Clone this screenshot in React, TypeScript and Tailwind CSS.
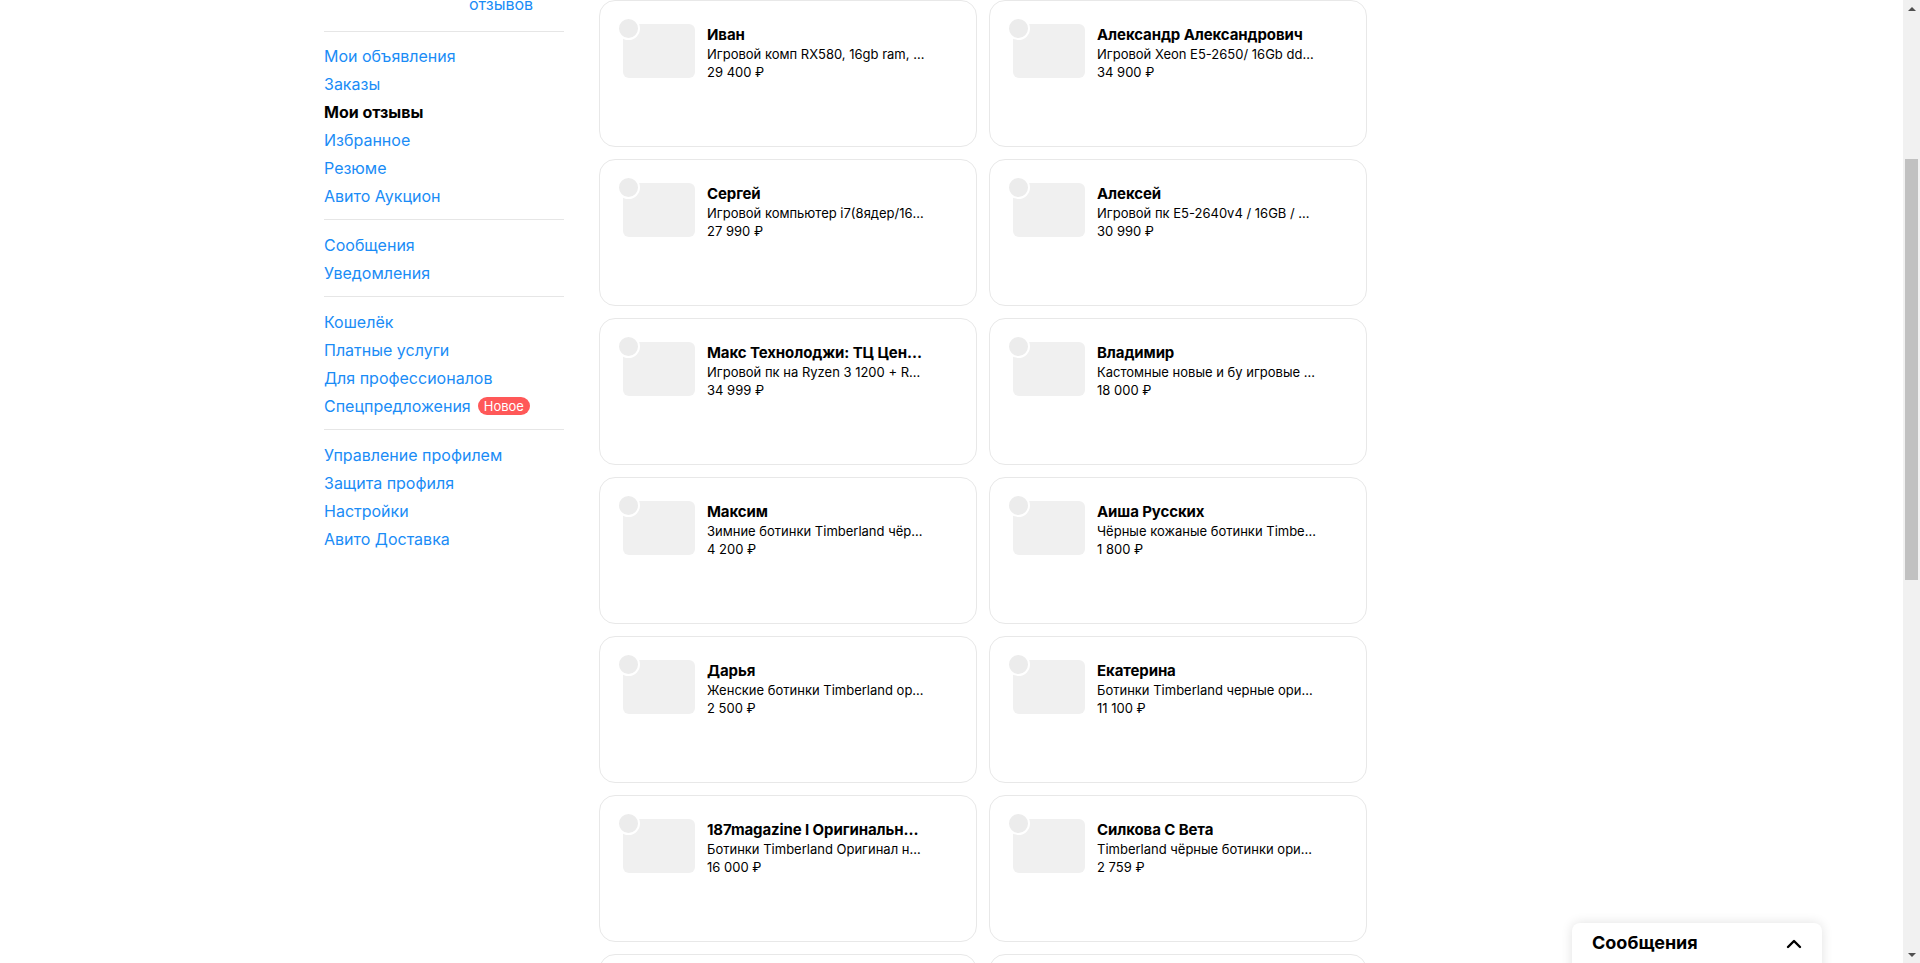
import React from 'react';
import { ChevronUp } from 'lucide-react';

interface Item {
  name: string;
  text: string;
  price: string;
}

const items: Item[] = [
  { name: 'Иван', text: 'Игровой комп RX580, 16gb ram, SSD 240gb', price: '29 400 ₽' },
  { name: 'Александр Александрович', text: 'Игровой Xeon E5-2650/ 16Gb ddr3 / GTX 1060', price: '34 900 ₽' },
  { name: 'Сергей', text: 'Игровой компьютер i7(8ядер/16 потоков)', price: '27 990 ₽' },
  { name: 'Алексей', text: 'Игровой пк E5-2640v4 / 16GB / RX 580', price: '30 990 ₽' },
  { name: 'Макс Технолоджи: ТЦ Центральный', text: 'Игровой пк на Ryzen 3 1200 + RX 570', price: '34 999 ₽' },
  { name: 'Владимир', text: 'Кастомные новые и бу игровые пк', price: '18 000 ₽' },
  { name: 'Максим', text: 'Зимние ботинки Timberland чёрные', price: '4 200 ₽' },
  { name: 'Аиша Русских', text: 'Чёрные кожаные ботинки Timberland', price: '1 800 ₽' },
  { name: 'Дарья', text: 'Женские ботинки Timberland оригинал', price: '2 500 ₽' },
  { name: 'Екатерина', text: 'Ботинки Timberland черные оригинал', price: '11 100 ₽' },
  { name: '187magazine I Оригинальные вещи', text: 'Ботинки Timberland Оригинал новые', price: '16 000 ₽' },
  { name: 'Силкова С Вета', text: 'Timberland чёрные ботинки оригинал', price: '2 759 ₽' },
  { name: 'Ольга', text: 'Ботинки Timberland мужские', price: '5 000 ₽' },
  { name: 'Николай', text: 'Timberland 6 inch premium', price: '7 500 ₽' },
];

const menu: { label: string; active?: boolean; badge?: string }[][] = [
  [
    { label: 'Мои объявления' },
    { label: 'Заказы' },
    { label: 'Мои отзывы', active: true },
    { label: 'Избранное' },
    { label: 'Резюме' },
    { label: 'Авито Аукцион' },
  ],
  [{ label: 'Сообщения' }, { label: 'Уведомления' }],
  [
    { label: 'Кошелёк' },
    { label: 'Платные услуги' },
    { label: 'Для профессионалов' },
    { label: 'Спецпредложения', badge: 'Новое' },
  ],
  [
    { label: 'Управление профилем' },
    { label: 'Защита профиля' },
    { label: 'Настройки' },
    { label: 'Авито Доставка' },
  ],
];

const Card: React.FC<{ item: Item }> = ({ item }) => (
  <div className="h-[147px] rounded-2xl border border-[#e8e8e8] bg-white px-[23px] pt-[23px] flex gap-3">
    <div className="relative w-[72px] h-[54px] shrink-0 rounded-md bg-[#f0f0f0]">
      <div className="absolute -left-[6px] -top-[7px] w-[23px] h-[23px] rounded-full bg-[#ececec] border-2 border-white" />
    </div>
    <div className="w-[219px] min-w-0 pt-px">
      <div className="truncate text-[15px] leading-5 font-bold tracking-[-0.1px] text-black">{item.name}</div>
      <div className="truncate text-[13px] leading-[18px] text-black">{item.text}</div>
      <div className="text-[13px] leading-[18px] text-black">{item.price}</div>
    </div>
  </div>
);

const App: React.FC = () => {
  return (
    <div className="flex h-screen overflow-hidden bg-white" style={{ fontFamily: 'Inter, "Noto Sans", sans-serif' }}>
      <div className="relative flex-1 overflow-hidden">
        <div className="flex pl-[324px] gap-[35px]">
          <aside className="w-[240px] shrink-0">
            <div className="-mt-[6px] pl-[145px] text-base leading-5 text-[#1a8cf6]">отзывов</div>
            <div className="mt-[17px]">
              {menu.map((group, gi) => (
                <div key={gi} className={gi > 0 ? 'border-t border-[#e6e6e6] pt-[11px] pb-[9px]' : 'border-t border-[#e6e6e6] pt-[10px] pb-[9px]'}>
                  {group.map((m) => (
                    <div key={m.label} className="flex items-center gap-[7px] h-[28px]">
                      <a className={m.active ? 'text-base font-bold text-black' : 'text-base text-[#1a8cf6]'}>{m.label}</a>
                      {m.badge && (
                        <span className="px-[6px] h-[18px] rounded-full bg-[#ff5858] text-white text-[13px] leading-[18px]">
                          {m.badge}
                        </span>
                      )}
                    </div>
                  ))}
                </div>
              ))}
            </div>
          </aside>
          <div className="grid grid-cols-[378px_378px] gap-3">
            {items.map((it, i) => (
              <Card key={i} item={it} />
            ))}
          </div>
        </div>

        <div className="absolute left-[1572px] top-[923px] w-[250px] h-[56px] rounded-t-lg bg-white shadow-[0_0_12px_rgba(0,0,0,0.12)] flex items-start justify-between pl-5 pr-4">
          <span className="text-[18px] leading-[40px] font-bold text-black">Сообщения</span>
          <ChevronUp className="mt-[9px] text-black" size={24} strokeWidth={2.4} />
        </div>
      </div>

      <div className="w-[17px] shrink-0 bg-[#f1f1f1] flex flex-col items-center">
        <div className="h-[17px] flex items-center justify-center">
          <div className="w-0 h-0 border-l-[4px] border-r-[4px] border-b-[4px] border-l-transparent border-r-transparent border-b-[#505050]" />
        </div>
        <div className="mt-[142px] w-[13px] h-[421px] bg-[#c1c1c1]" />
        <div className="flex-1" />
        <div className="h-[17px] flex items-center justify-center">
          <div className="w-0 h-0 border-l-[4px] border-r-[4px] border-t-[4px] border-l-transparent border-r-transparent border-t-[#505050]" />
        </div>
      </div>
    </div>
  );
};

export default App;
